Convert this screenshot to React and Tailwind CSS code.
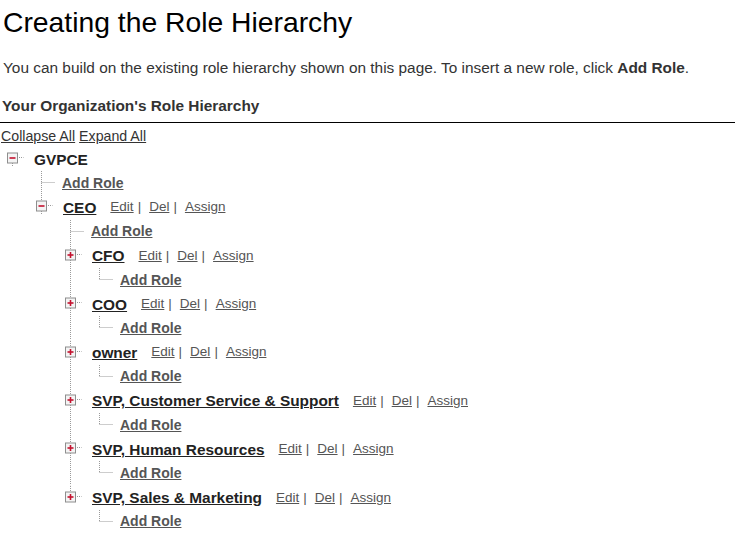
import React from 'react';

const ROW_H = 24.2;

const tree = {
  name: 'GVPCE',
  root: true,
  expanded: true,
  children: [
    {
      name: 'CEO',
      expanded: true,
      children: [
        { name: 'CFO' },
        { name: 'COO' },
        { name: 'owner' },
        { name: 'SVP, Customer Service & Support' },
        { name: 'SVP, Human Resources' },
        { name: 'SVP, Sales & Marketing' },
      ],
    },
  ],
};

const DOT = '#9a9a9a';

// one 29px column of the tree's dotted guides
const Cell = ({ type, expanded }) => {
  const cx = 12.5;
  const cy = 11;
  return (
    <svg width="29" height={ROW_H} className="shrink-0 block">
      {type === 'line' && (
        <line x1={cx} y1="0" x2={cx} y2={ROW_H} stroke={DOT} strokeDasharray="1 1" />
      )}
      {(type === 'tee' || type === 'ell') && (
        <>
          <line x1={cx} y1="0" x2={cx} y2={type === 'tee' ? ROW_H : cy} stroke={DOT} strokeDasharray="1 1" />
          <line x1={cx} y1={cy + 0.5} x2={cx + 14} y2={cy + 0.5} stroke={DOT} strokeDasharray="1 1" />
        </>
      )}
      {(type === 'node' || type === 'nodeMore' || type === 'root') && (
        <>
          {type !== 'root' && (
            <line x1={cx} y1="0" x2={cx} y2={cy - 5} stroke={DOT} strokeDasharray="1 1" />
          )}
          {type === 'nodeMore' && (
            <line x1={cx} y1={cy + 5} x2={cx} y2={ROW_H} stroke={DOT} strokeDasharray="1 1" />
          )}
          {type !== 'nodeMore' && expanded && (
            <line x1={cx} y1={cy + 5} x2={cx} y2={cy + 9} stroke={DOT} strokeDasharray="1 1" />
          )}
          <rect x={cx - 5} y={cy - 5} width="10" height="10" fill="#f4f4f4" stroke="#8e8e8e" />
          <line x1={cx - 3} y1={cy} x2={cx + 3} y2={cy} stroke="#c4122f" strokeWidth="1.6" />
          {!expanded && (
            <line x1={cx} y1={cy - 3} x2={cx} y2={cy + 3} stroke="#c4122f" strokeWidth="1.6" />
          )}
          <line x1={cx + 6.5} y1={cy - 0.5} x2={cx + 11} y2={cy - 0.5} stroke={DOT} strokeDasharray="1 1" />
        </>
      )}
    </svg>
  );
};

const Guides = ({ guides }) =>
  guides.map((g, i) => <Cell key={i} type={g ? 'line' : 'none'} />);

const Links = () => (
  <span className="ml-[14px] text-[13.5px] text-[#555]">
    <a className="underline">Edit</a>
    <span className="ml-[4px] mr-[8px]">|</span>
    <a className="underline">Del</a>
    <span className="ml-[4px] mr-[8px]">|</span>
    <a className="underline">Assign</a>
  </span>
);

const rows = [];
const walk = (node, guides, isLast) => {
  const kids = node.children || [];
  rows.push(
    <div key={rows.length} className="flex items-center" style={{ height: ROW_H }}>
      <Guides guides={guides} />
      <Cell type={node.root ? 'root' : isLast ? 'node' : 'nodeMore'} expanded={node.expanded} />
      <span className="ml-[5px] flex items-center">
        <span className={`text-[15.4px] font-bold text-[#222] ${node.root ? '' : 'underline'}`}>{node.name}</span>
        {!node.root && <Links />}
      </span>
    </div>
  );
  const next = [...guides, !node.root && !isLast];
  rows.push(
    <div key={rows.length} className="flex items-center" style={{ height: ROW_H }}>
      <Guides guides={next} />
      <Cell type={kids.length ? 'tee' : 'ell'} />
      <a className="ml-[4px] text-[14px] font-bold text-[#555] underline">Add Role</a>
    </div>
  );
  kids.forEach((k, i) => walk(k, next, i === kids.length - 1));
};
walk(tree, [], true);

export default function App() {
  return (
    <div className="w-[735px] h-[545px] overflow-hidden bg-white font-['Liberation_Sans',Arial,sans-serif] text-[#333]">
      <h1 className="pl-[3px] pt-[3px] text-[28.3px] leading-[38px] text-black">Creating the Role Hierarchy</h1>
      <p className="pl-[3px] mt-[17px] text-[15.4px] leading-[20px]">
        You can build on the existing role hierarchy shown on this page. To insert a new role, click{' '}
        <b>Add Role</b>.
      </p>
      <h2 className="pl-[2px] mt-[18px] pb-[6px] text-[15.4px] leading-[20px] font-bold border-b border-black">
        Your Organization's Role Hierarchy
      </h2>
      <div className="pl-[1px] mt-[4px] text-[14.2px] leading-[18px] text-[#333]">
        <a className="underline">Collapse All</a> <a className="underline">Expand All</a>
      </div>
      <div className="mt-[2px]">{rows}</div>
    </div>
  );
}
